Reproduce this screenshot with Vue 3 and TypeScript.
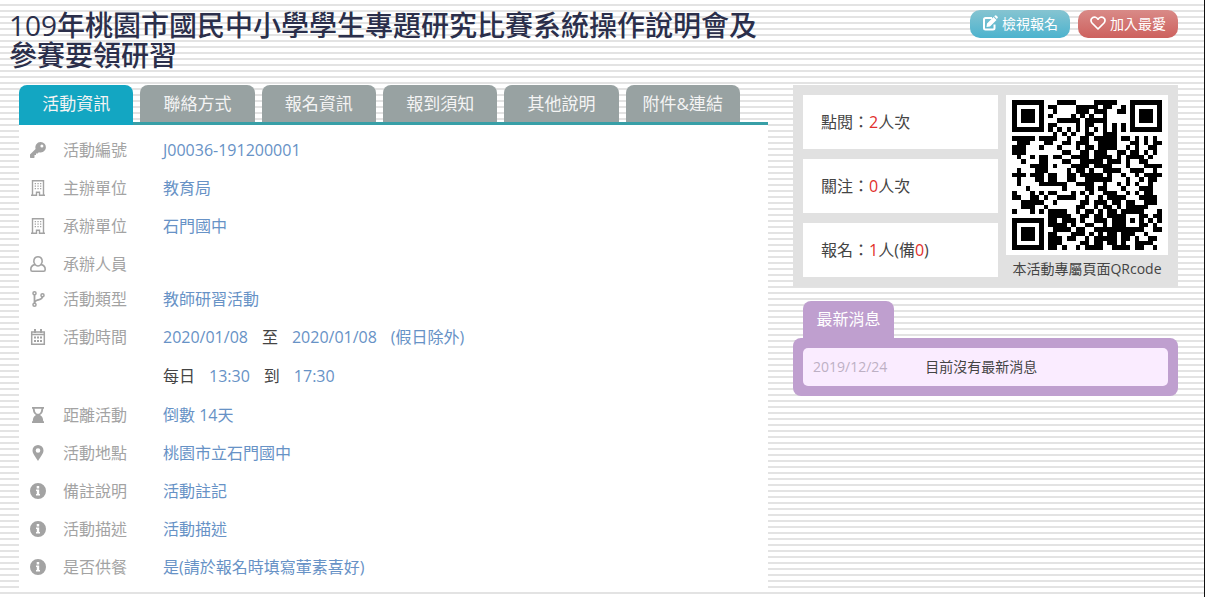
<script setup lang="ts">
import { ref } from 'vue'

interface Part {
  text: string
  plain?: boolean
}
interface Row {
  icon: string
  label: string
  lines: Part[][]
  compact?: boolean
}

const tabs = ['活動資訊', '聯絡方式', '報名資訊', '報到須知', '其他說明', '附件&連結']
const active = ref(0)

const rows: Row[] = [
  { icon: 'key', label: '活動編號', lines: [[{ text: 'J00036-191200001' }]] },
  { icon: 'building', label: '主辦單位', lines: [[{ text: '教育局' }]] },
  { icon: 'building', label: '承辦單位', lines: [[{ text: '石門國中' }]] },
  { icon: 'user', label: '承辦人員', lines: [], compact: true },
  { icon: 'branch', label: '活動類型', lines: [[{ text: '教師研習活動' }]] },
  {
    icon: 'calendar',
    label: '活動時間',
    lines: [
      [{ text: '2020/01/08' }, { text: '至', plain: true }, { text: '2020/01/08' }, { text: '(假日除外)' }],
      [{ text: '每日', plain: true }, { text: '13:30' }, { text: '到', plain: true }, { text: '17:30' }],
    ],
  },
  { icon: 'hourglass', label: '距離活動', lines: [[{ text: '倒數 14天' }]] },
  { icon: 'marker', label: '活動地點', lines: [[{ text: '桃園市立石門國中' }]] },
  { icon: 'info', label: '備註說明', lines: [[{ text: '活動註記' }]] },
  { icon: 'info', label: '活動描述', lines: [[{ text: '活動描述' }]] },
  { icon: 'info', label: '是否供餐', lines: [[{ text: '是(請於報名時填寫葷素喜好)' }]] },
]

const qr = [
  '#######...####....#####...#######',
  '#.....#.##....#####.##..#.#.....#',
  '#.###.#..#....###.###..##.#.###.#',
  '#.###.#.#....#.#.#..#.....#.###.#',
  '#.###.#...#####.#####.....#.###.#',
  '#.....#.##....#.##..#.#.#.#.....#',
  '#######.#.#.#.#.#.#.#.#.#.#######',
  '.........#.#.#..##..###..........',
  '#####.####..#..##.#####.##.#.#.#.',
  '.###...##..##.###..####...##.#.##',
  '###...#...#...#.##.####..#.#..##.',
  '###........##..##.###..##.##.#.#.',
  '.#..#.##.##..####.####.#.####.#..',
  '..#...##...##..#####.###.#..##...',
  '....####.#...####.####...#...####',
  '.#...###....#.##.#..####..###..#.',
  '###.###.##..##.#####.#..#..#.####',
  '.#...##.##..##..######...#..#.##.',
  '.#....######..####..#..#.#.#..#..',
  '...#.......#....##.##...#...###..',
  '#...#.#.##...#.#.#..###..#.#.##..',
  '##..##.#..####..#..#.####...####.',
  '..#####..#.....##.###.##.##..###.',
  '..###..#......##..#.##.#.#####...',
  '#...#.#.####..#.##.#.##.#####...#',
  '........#####..##.##.####...##.##',
  '#######.##.###.#..###.###.#.#.#.#',
  '#.....#.####.#..##..#.###...##.#.',
  '#.###.#..####.##..###########..##',
  '#.###.#.##...###.#.#.##.###..#...',
  '#.###.#.###.##..#.#####.##.#..##.',
  '#.....#.###....##.##.##.#..####..',
  '#######.##.#..#.####..####.##..#.',
]
const qrPath = qr
  .map((line, y) => [...line].map((c, x) => (c === '#' ? `M${x} ${y}h1v1h-1z` : '')).join(''))
  .join('')
</script>

<template>
  <div class="page">
    <h1>109年桃園市國民中小學學生專題研究比賽系統操作說明會及參賽要領研習</h1>

    <div class="actions">
      <button type="button" class="btn view">
        <svg viewBox="0 0 16 16" aria-hidden="true">
          <path d="M10 3H3.500Q2 3 2 4.500V13Q2 14.500 3.500 14.500H11Q12.500 14.500 12.500 13V9.500" fill="none" stroke="currentColor" stroke-width="2" />
          <path d="M5 8.500 11.500 2l3 3L8 11.500l-3.500.5zM12.200 1.300l.9-.8q.6-.5 1.200 0l1.300 1.300q.5.6 0 1.200l-.8.9z" fill="currentColor" />
        </svg>
        檢視報名
      </button>
      <button type="button" class="btn fav">
        <svg viewBox="0 0 16 16" aria-hidden="true">
          <path d="M8 14 2 8Q.3 5.800 1.500 3.700 3 1.500 5.500 2.200 7 2.700 8 4.200 9 2.700 10.500 2.200 13 1.500 14.500 3.700 15.700 5.800 14 8z" fill="none" stroke="currentColor" stroke-width="1.700" stroke-linejoin="round" />
        </svg>
        加入最愛
      </button>
    </div>

    <main>
      <div class="tabs" role="tablist">
        <button
          v-for="(tab, i) in tabs"
          :key="tab"
          type="button"
          role="tab"
          :aria-selected="active === i"
          :class="['tab', { active: active === i }]"
          @click="active = i"
        >{{ tab }}</button>
      </div>
      <dl class="details">
        <div v-for="row in rows" :key="row.label" :class="['row', { compact: row.compact }]">
          <dt>
            <svg viewBox="0 0 16 16" aria-hidden="true">
              <path v-if="row.icon === 'key'" fill-rule="evenodd" d="M10.500 0a5.300 5.300 0 1 1-1.700 10.300L7.700 11.500H6V13H4.500v2.500L4 16H.5L0 15.500v-3L5.600 6.900A5.300 5.300 0 0 1 10.500 0zm1.400 2.600a1.500 1.500 0 1 0 0 3 1.500 1.500 0 0 0 0-3z" />
              <g v-else-if="row.icon === 'building'">
                <path fill="none" stroke="currentColor" stroke-width="1.400" d="M2.500 15V.7h11V15M1 15.300h5.500v-3h3v3H15" />
                <path d="M4.700 3h1.300v1.200H4.700zM7.400 3h1.300v1.200H7.400zM10 3h1.300v1.200H10zM4.700 5.500h1.300v1.200H4.700zM7.400 5.500h1.300v1.200H7.400zM10 5.500h1.300v1.200H10zM4.700 8h1.300v1.200H4.700zM7.400 8h1.300v1.200H7.400zM10 8h1.300v1.200H10z" />
              </g>
              <path v-else-if="row.icon === 'user'" fill="none" stroke="currentColor" stroke-width="1.600" d="M5 8.500C2.500 5.500 4 .8 8 .8s5.500 4.700 3 7.700c-1.700 2-4.300 2-6 0zM4.700 8.600C2 9.200.8 11 .8 13.500q0 1.700 1.500 1.700h11.400q1.500 0 1.500-1.700c0-2.500-1.200-4.300-3.900-4.900" />
              <g v-else-if="row.icon === 'branch'">
                <path fill="none" stroke="currentColor" stroke-width="1.800" d="M4.500 3v10M12.500 5c0 4-3.500 3.500-6 4.500-1.500.6-2 1.500-2 3" />
                <path fill-rule="evenodd" d="M4.500 0a2.300 2.300 0 1 1 0 4.600 2.300 2.300 0 0 1 0-4.600zm0 1.500a.8.8 0 1 0 0 1.600.8.8 0 0 0 0-1.600zM4.500 11.400a2.300 2.300 0 1 1 0 4.600 2.300 2.300 0 0 1 0-4.600zm0 1.500a.8.8 0 1 0 0 1.600.8.8 0 0 0 0-1.600zM12.500 2a2.300 2.300 0 1 1 0 4.600 2.300 2.300 0 0 1 0-4.600zm0 1.500a.8.8 0 1 0 0 1.600.8.8 0 0 0 0-1.600z" />
              </g>
              <g v-else-if="row.icon === 'calendar'">
                <path fill="none" stroke="currentColor" stroke-width="1.500" d="M1.700 3h12.600v12.200H1.700zM1.700 5.500h12.600" />
                <path d="M4 0h2v4H4zM10 0h2v4h-2zM4 7.500h2v2H4zM7 7.500h2v2H7zM10 7.500h2v2h-2zM4 11h2v2H4zM7 11h2v2H7zM10 11h2v2h-2z" />
              </g>
              <path v-else-if="row.icon === 'hourglass'" fill-rule="evenodd" d="M2 0h12v1.800h-.8C13.200 5 12 7 10 8c2 1 3.200 3 3.200 6.200h.8V16H2v-1.800h.8C2.800 11 4 9 6 8 4 7 2.800 5 2.800 1.800H2zm2.500 1.800q.2 3.200 2.300 4.900h2.400q2.100-1.700 2.300-4.900z" />
              <path v-else-if="row.icon === 'marker'" fill-rule="evenodd" d="M8 0a5.500 5.500 0 0 1 5.500 5.500c0 3-2.500 5.500-5.500 10.500-3-5-5.500-7.500-5.500-10.500A5.500 5.500 0 0 1 8 0zm0 3.200a2.300 2.300 0 1 0 0 4.600 2.300 2.300 0 0 0 0-4.600z" />
              <path v-else fill-rule="evenodd" d="M8 0a8 8 0 1 1 0 16A8 8 0 0 1 8 0zm-1.300 3v2.400h2.500V3zM6 6.500V8h.8v3H6v1.500h4V11h-.8V6.500z" />
            </svg>
            {{ row.label }}
          </dt>
          <dd>
            <div v-for="(line, i) in row.lines" :key="i" class="line">
              <span v-for="(part, j) in line" :key="j" :class="{ plain: part.plain }">{{ part.text }}</span>
            </div>
          </dd>
        </div>
      </dl>
    </main>

    <aside>
      <section class="summary">
        <div class="stats">
          <p>點閱：<b>2</b>人次</p>
          <p>關注：<b>0</b>人次</p>
          <p>報名：<b>1</b>人(備<b>0</b>)</p>
        </div>
        <figure>
          <svg class="qr" viewBox="0 0 33 33" role="img" aria-label="QRcode" shape-rendering="crispEdges">
            <path :d="qrPath" />
          </svg>
          <figcaption>本活動專屬頁面QRcode</figcaption>
        </figure>
      </section>

      <section class="news">
        <h2>最新消息</h2>
        <div class="frame">
          <div class="item">
            <time datetime="2019-12-24">2019/12/24</time>
            <span>目前沒有最新消息</span>
          </div>
        </div>
      </section>
    </aside>
  </div>
</template>

<style>
body {
  margin: 0;
}
</style>

<style scoped>
.page {
  box-sizing: border-box;
  min-height: 100vh;
  padding: 10px 26px 7px 9px;
  border-right: 1px solid #111;
  display: grid;
  grid-template-columns: minmax(0, 1fr) 385px;
  grid-template-rows: auto 1fr;
  gap: 15px 25px;
  background: #fff repeating-linear-gradient(#fff 0 4px, #e3e3e3 4px 6px);
  font-family: "Open Sans", "Noto Sans CJK TC", sans-serif;
  font-size: 16px;
  color: #444;
}
h1,
h2,
p,
dl,
dd,
figure {
  margin: 0;
}
h1 {
  font-size: 28px;
  line-height: 30px;
  font-weight: 500;
  color: #2b2f4b;
}
.actions {
  display: flex;
  justify-content: flex-end;
  align-items: flex-start;
  gap: 8px;
}
.btn {
  display: flex;
  align-items: center;
  justify-content: center;
  gap: 4px;
  width: 100px;
  height: 28px;
  padding: 0 0 2px;
  border: 0;
  border-radius: 10px;
  font: inherit;
  font-size: 14px;
  color: #fff;
}
.btn svg {
  width: 16px;
  height: 16px;
}
.view {
  background: linear-gradient(#86c4d1, #4cb3ce);
}
.fav {
  background: linear-gradient(#d98a87, #cd615e);
}
main {
  padding-left: 10px;
}
.tabs {
  display: flex;
  gap: 7px;
  padding-right: 28px;
  border-bottom: 3px solid #389fa7;
}
.tab {
  flex: 1;
  height: 37px;
  padding: 0 0 2px;
  border: 0;
  border-radius: 8px 8px 0 0;
  background: #98a2a2;
  color: #f4f4f4;
  font: inherit;
  font-size: 17px;
}
.tab.active {
  height: 40px;
  margin-bottom: -3px;
  padding-bottom: 5px;
  background: #13a6c2;
}
.details {
  padding: 6px 11px 3px;
  background: #fff;
}
.row {
  display: grid;
  grid-template-columns: 133px 1fr;
  line-height: 38px;
}
.compact {
  height: 35px;
}
dt {
  display: flex;
  align-items: center;
  gap: 17px;
  height: 38px;
  color: #a3a3a3;
}
dt svg {
  width: 16px;
  height: 16px;
  fill: currentColor;
}
dd {
  color: #6792c6;
}
.line {
  display: flex;
  gap: 14px;
}
.line + .line {
  line-height: 40px;
}
.plain {
  color: #444;
}
.summary {
  display: flex;
  gap: 8px;
  padding: 10px;
  background: #e1e1e1;
}
.stats {
  flex: 1;
  display: flex;
  flex-direction: column;
  gap: 10px;
}
.stats p {
  padding-left: 18px;
  line-height: 54px;
  background: #fff;
}
.stats b {
  font-weight: 400;
  color: #e2302c;
}
figure {
  width: 162px;
}
.qr {
  display: block;
  box-sizing: border-box;
  width: 100%;
  padding: 5px 6px;
  background: #fff;
}
figcaption {
  height: 20px;
  line-height: 28px;
  text-align: center;
  font-size: 14px;
  white-space: nowrap;
}
.news {
  margin-top: 14px;
}
.news h2 {
  width: 91px;
  margin-left: 10px;
  border-radius: 8px 8px 0 0;
  background: #bf9fcf;
  color: #fff;
  text-align: center;
  font-size: 16px;
  font-weight: 400;
  line-height: 37px;
}
.frame {
  padding: 10px;
  border-radius: 8px;
  background: #bf9fcf;
}
.item {
  display: flex;
  align-items: center;
  gap: 38px;
  padding-left: 10px;
  border-radius: 5px;
  background: #faecff;
  line-height: 38px;
  font-size: 14px;
}
.item time {
  color: #bdb0c4;
}
</style>
